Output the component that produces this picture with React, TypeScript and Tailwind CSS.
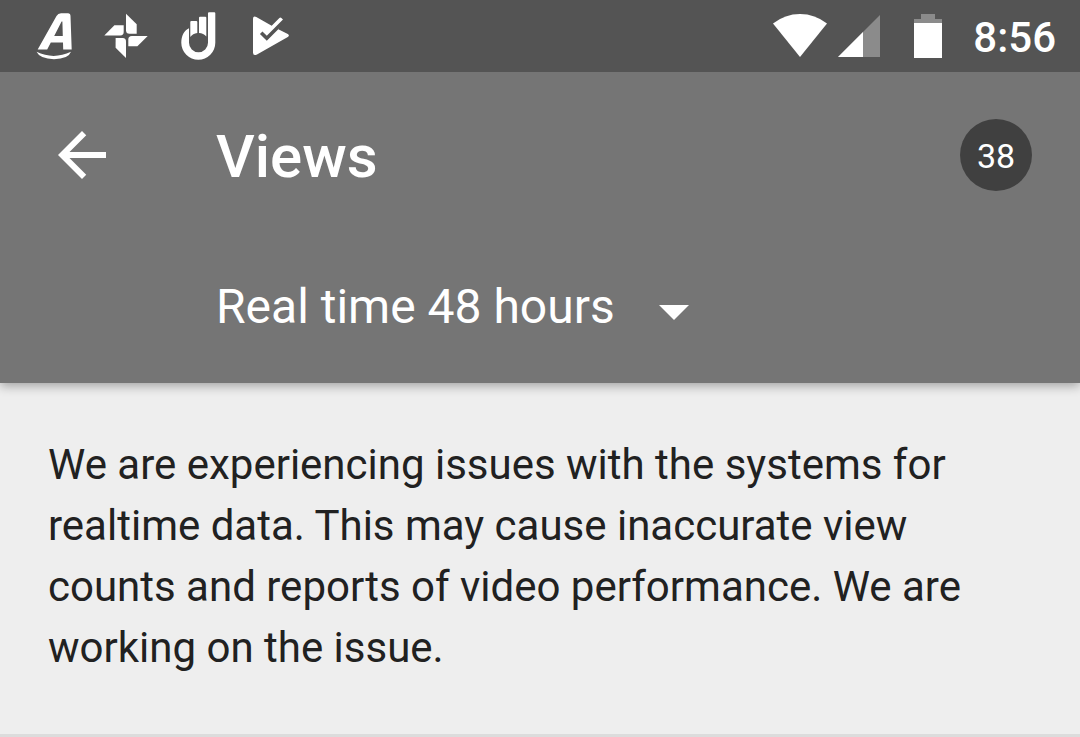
import { useState } from "react";
import type { ReactNode } from "react";

const RANGES = ["Real time 48 hours", "Last 7 days", "Last 28 days"];

function NotificationIcon({ children }: { children: ReactNode }) {
  return (
    <svg viewBox="0 0 48 48" className="size-12 fill-white" aria-hidden="true">
      {children}
    </svg>
  );
}

function StatusBar() {
  return (
    <div className="relative z-10 flex h-18 items-center justify-between bg-[#545454] pl-[30px] pr-6">
      {/* Notifications */}
      <div className="flex items-center gap-6">
        <NotificationIcon>
          <path
            fillRule="evenodd"
            d="M7.7 37.5 26.5 4Q28 1.2 31 1.2H38Q40.4 1.2 40.5 4L41.7 37.5H33.2L33 30.5H20.8L17.2 37.5ZM24.2 24H32.8L32.4 9.5H31.6Z"
          />
          <path d="M6.5 39.8Q23.5 48 41 39.8Q38.5 47 24 47.2Q10 47 6.5 39.8Z" />
        </NotificationIcon>
        <NotificationIcon>
          <path d="M24 1.7 34.7 12.3V21.7H27.5Q24 21.7 24 18.2Z" />
          <path d="M45.7 24 35.4 34.3H26.3V27.5Q26.3 24 29.8 24Z" />
          <path d="M24 46 13.6 35.7V26H20.8Q24 26 24 29.5Z" />
          <path d="M2.3 23.4 12.4 13.3H21.7V20Q21.7 23.4 18.2 23.4Z" />
        </NotificationIcon>
        <NotificationIcon>
          <path d="M15 16.3C10 18.2 7.3 24.5 7.3 30.7A17 17 0 0 0 41.3 30.7V1.3Q41.3.3 40.3.3H35Q34 .3 34 1.3V30.7A9.5 9.5 0 0 1 15 30.7Z" />
          <path d="M16.3 10Q16.3 9 17.3 9H22.3Q23.3 9 23.3 10V21Q18.8 21.6 16.3 25Z" />
          <path d="M25 5.7Q25 4.7 26 4.7H31.3Q32.3 4.7 32.3 5.7V24.5Q29.5 21.3 25 21Z" />
        </NotificationIcon>
        <NotificationIcon>
          <path d="M7 6.8Q7 3.7 10.3 5L25.7 13.7 33.4 5.9Q34.4 5 35.4 6L36.9 7.4Q37.8 8.3 37 9.2L32.3 17.3 41.8 22Q44 23.4 41.8 25L11 42.5Q7 44.3 7 40.5Z" />
          <path d="M15.2 20.7 20.8 26.3 39.5 7.6" fill="none" stroke="#545454" strokeWidth="3.6" />
        </NotificationIcon>
      </div>

      {/* System status */}
      <div className="flex items-center">
        <svg viewBox="0 0 54 44" className="h-11 w-[54px] fill-white" aria-hidden="true">
          <path d="M0 9.5Q12 0 27 0T54 9.5L27 43Z" />
        </svg>
        <svg viewBox="0 0 44 44" className="ml-[10px] size-11" aria-hidden="true">
          <path d="M43 1V43H1Z" fill="#8b8b8b" />
          <path d="M26 18V43H1Z" fill="#fff" />
        </svg>
        <svg viewBox="0 0 28 44" className="ml-[33px] h-11 w-7" aria-hidden="true">
          <path d="M7 0H21V5H28V9H0V5H7Z" fill="#8b8b8b" />
          <path d="M0 9H28V44H0Z" fill="#fff" />
        </svg>
        <time className="ml-[31px] pt-1 text-[42px] font-medium leading-none text-white">8:56</time>
      </div>
    </div>
  );
}

export default function App() {
  const [range, setRange] = useState(RANGES[0]);

  return (
    <div className="min-h-screen bg-[#eeeeee] font-['Roboto',sans-serif]">
      <StatusBar />

      <header className="relative bg-[#757575] pb-2 text-white shadow-[0_3px_10px_rgba(0,0,0,0.32)]">
        <div className="flex h-[166px] items-center pl-[46px] pr-12">
          <button type="button" aria-label="Back" className="shrink-0">
            <svg viewBox="0 0 24 24" className="size-18 fill-white" aria-hidden="true">
              <path d="M20 11H7.83l5.59-5.59L12 4l-8 8 8 8 1.41-1.41L7.83 13H20v-2z" />
            </svg>
          </button>
          <h1 className="ml-[98px] flex-1 pt-1 text-[60px] font-medium leading-none">Views</h1>
          <span className="flex size-18 shrink-0 items-center justify-center rounded-full bg-[#404040] pt-0.5 text-[34px] leading-none">
            38
          </span>
        </div>

        <div className="flex h-[137px] items-center pl-[216px]">
          <div className="relative flex items-center">
            <select
              aria-label="Time range"
              value={range}
              onChange={(e) => setRange(e.target.value)}
              className="appearance-none bg-transparent pr-[74px] text-[48px] leading-[60px] outline-none"
            >
              {RANGES.map((r) => (
                <option key={r} value={r} className="text-black">
                  {r}
                </option>
              ))}
            </select>
            <svg
              viewBox="0 0 30 28"
              className="pointer-events-none absolute right-0 h-7 w-[30px] fill-white"
              aria-hidden="true"
            >
              <path d="M0 12H30L15 27Z" />
            </svg>
          </div>
        </div>
      </header>

      <main className="border-b-3 border-[#dcdcdc] px-12 pb-14 pt-[51px]">
        <p className="max-w-[940px] text-[42px] leading-[61px] text-[#212121]">
          We are experiencing issues with the systems for realtime data. This may cause inaccurate view counts and
          reports of video performance. We are working on the issue.
        </p>
      </main>
    </div>
  );
}
